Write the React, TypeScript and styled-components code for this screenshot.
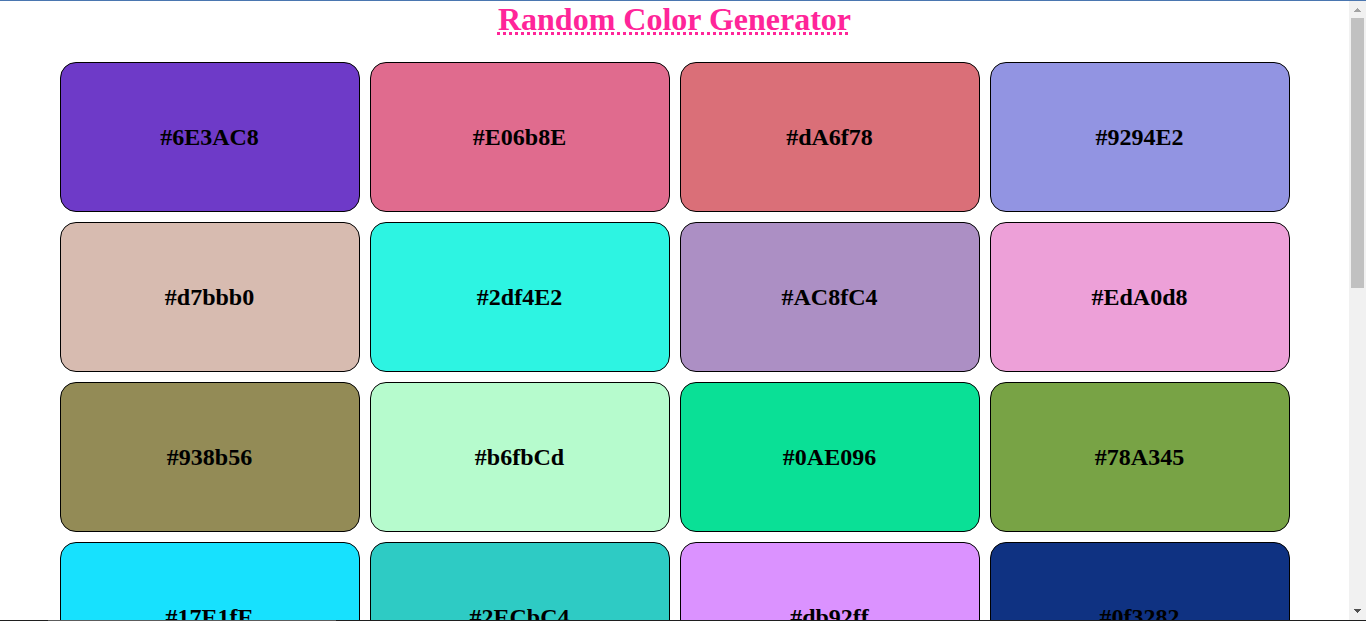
import React from "react";
import styled, { createGlobalStyle } from "styled-components";

const GlobalStyle = createGlobalStyle`
  * { box-sizing: border-box; }
  body {
    margin: 0;
    background: #ffffff;
    font-family: "Liberation Serif", "Times New Roman", serif;
  }
`;

const Frame = styled.div`
  display: flex;
  flex-direction: column;
  height: 100vh;
  border-top: 1px solid #4a76b0;
`;

const Window = styled.div`
  display: flex;
  flex: 1;
  min-height: 0;
  overflow: hidden;
`;

const TaskbarEdge = styled.div`
  height: 1px;
  background: linear-gradient(#5c5c5c, #5c5c5c) 48px 0 / 288px 1px no-repeat #1f1f1f;
`;

const Page = styled.main`
  flex: 1;
  min-width: 0;
  overflow: hidden;
`;

const Title = styled.h1`
  margin: 0 0 24px;
  font-size: 32px;
  line-height: 37px;
  text-align: center;
  color: #ff2599;
  text-decoration: underline dotted 3px;
  text-decoration-skip-ink: none;
`;

const Palette = styled.ul`
  display: grid;
  grid-template-columns: repeat(auto-fit, 300px);
  grid-auto-rows: 150px;
  gap: 10px;
  justify-content: center;
  margin: 0;
  padding: 0;
  list-style: none;
`;

const Swatch = styled.li<{ $color: string }>`
  display: flex;
  align-items: center;
  justify-content: center;
  border: 1px solid #000000;
  border-radius: 16px;
  background: ${({ $color }) => $color};
  color: #000000;
  font-size: 24px;
  font-weight: bold;
  line-height: 28px;
`;

const ScrollTrack = styled.div`
  display: flex;
  flex-direction: column;
  align-items: center;
  width: 17px;
  background: #f1f1f1;
`;

const ScrollArrow = styled.svg`
  display: block;
  width: 17px;
  height: 17px;
`;

const ScrollLane = styled.div`
  display: flex;
  flex-direction: column;
  flex: 1;
  width: 13px;
`;

const ScrollThumb = styled.div`
  flex: 6;
  background: #c1c1c1;
`;

const ScrollRest = styled.div`
  flex: 7;
`;

const colors = [
  "#6E3AC8", "#E06b8E", "#dA6f78", "#9294E2",
  "#d7bbb0", "#2df4E2", "#AC8fC4", "#EdA0d8",
  "#938b56", "#b6fbCd", "#0AE096", "#78A345",
  "#17E1fE", "#2ECbC4", "#db92ff", "#0f3282",
];

export default function App() {
  return (
    <>
      <GlobalStyle />
      <Frame>
        <Window>
          <Page>
            <Title>Random Color Generator</Title>
            <Palette>
              {colors.map((color) => (
                <Swatch key={color} $color={color}>{color}</Swatch>
              ))}
            </Palette>
          </Page>
          <ScrollTrack aria-hidden="true">
            <ScrollArrow viewBox="0 0 17 17" shapeRendering="crispEdges">
              <path d="M8 7h1v1h1v1h1v1h1v1H5v-1h1V9h1V8h1z" fill="#a3a3a3" />
            </ScrollArrow>
            <ScrollLane>
              <ScrollThumb />
              <ScrollRest />
            </ScrollLane>
            <ScrollArrow viewBox="0 0 17 17" shapeRendering="crispEdges">
              <path d="M5 6h7v1h-1v1h-1v1H9v1H8V9H7V8H6V7H5z" fill="#505050" />
            </ScrollArrow>
          </ScrollTrack>
        </Window>
        <TaskbarEdge />
      </Frame>
    </>
  );
}
